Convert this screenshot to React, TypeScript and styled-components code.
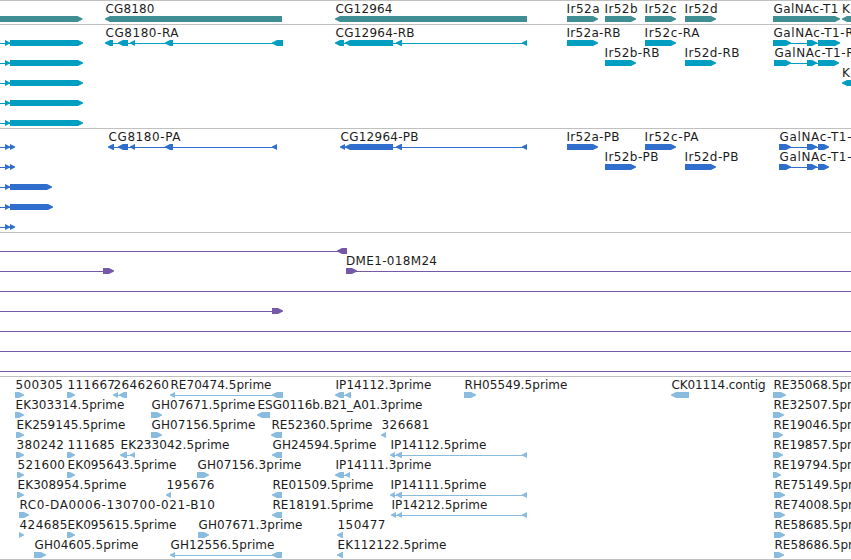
import styled, { createGlobalStyle } from 'styled-components';

const VIEW_WIDTH = 851;
const LANE_HEIGHT = 20;
const HEAD = 5;

const GlobalStyle = createGlobalStyle`
  body {
    margin: 0;
    background: #fff;
    overflow: hidden;
  }
`;

const Browser = styled.main`
  display: flex;
  flex-direction: column;
  width: ${VIEW_WIDTH}px;
  height: 560px;
  box-sizing: border-box;
  border-bottom: 1px solid #c0c0c0;
  overflow: hidden;
`;

const StyledTrack = styled.section<{ $color: string }>`
  display: flex;
  flex: none;
  flex-direction: column;
  padding-bottom: 3px;
  border-top: 1px solid #c0c0c0;
  color: ${(props) => props.$color};

  &:last-child {
    padding-bottom: 2px;
  }
`;

// Glyphs hang one pixel below the lane box, so each lane is allowed to spill over.
const Lane = styled.svg`
  display: block;
  flex: none;
  width: ${VIEW_WIDTH}px;
  height: ${LANE_HEIGHT}px;
  overflow: visible;
`;

const Label = styled.text`
  fill: #1c1c1c;
  font-family: 'DejaVu Sans', sans-serif;
  font-size: 12px;
`;

type Strand = '+' | '-';
type Span = [number, number];

interface Feature {
  strand?: Strand;
  exons?: Span[];
  // intron line, when it reaches past the exons
  line?: Span;
  label?: string;
  at?: Span;
}

const f = (strand: Strand, exons: Span[], label?: string, at?: Span, line?: Span): Feature => ({
  strand, exons, label, at, line,
});

const edge = (...exons: Span[]) => f('+', exons, undefined, undefined, [0, exons[0][0]]);
const through: Feature = { line: [0, VIEW_WIDTH] };

const tracks: { name: string; color: string; lanes: Feature[][] }[] = [
  {
    name: 'genes',
    color: '#3f8e93',
    lanes: [[
      f('+', [[-10, 82.5]]),
      f('-', [[105, 282]], 'CG8180', [105, 154]),
      f('-', [[335, 527]], 'CG12964', [335, 392]),
      f('+', [[567, 598]], 'Ir52a', [566, 599]),
      f('+', [[605, 636]], 'Ir52b', [604, 637]),
      f('+', [[645, 676]], 'Ir52c', [644, 676]),
      f('+', [[685, 716]], 'Ir52d', [684, 717]),
      f('+', [[773, 840]], 'GalNAc-T1', [773, 838]),
      f('-', [[842, 870]], 'K', [841.5, 850]),
    ]],
  },
  {
    name: 'transcripts',
    color: '#009fc1',
    lanes: [
      [
        edge([5, 10], [10, 83]),
        f('-', [[105, 113], [118, 128], [130, 135], [165, 173], [272, 283]], 'CG8180-RA', [105, 178]),
        f('-', [[335, 344], [345, 393], [396, 402], [522, 527]], 'CG12964-RB', [335, 414]),
        f('+', [[567, 598]], 'Ir52a-RB', [566, 620]),
        f('+', [[645, 676]], 'Ir52c-RA', [644, 699]),
        f('+', [[773, 791], [807, 817], [818, 840]], 'GalNAc-T1-R', [773, 853]),
      ],
      [
        edge([5, 10], [10, 83]),
        f('+', [[605, 636]], 'Ir52b-RB', [604, 659]),
        f('+', [[685, 716]], 'Ir52d-RB', [684, 739]),
        f('+', [[774, 791], [807, 817], [818, 839]], 'GalNAc-T1-R', [774, 854]),
      ],
      [edge([5, 10], [10, 83]), f('-', [[842, 870]], 'K', [841.5, 850])],
      [edge([5, 10], [10, 83])],
      [edge([5, 10], [10, 83])],
    ],
  },
  {
    name: 'proteins',
    color: '#306ecd',
    lanes: [
      [
        edge([5, 10], [10, 15]),
        f('-', [[108, 114], [118, 128], [130, 135], [165, 173], [272, 277]], 'CG8180-PA', [108, 180]),
        f('-', [[340, 345], [345, 393], [396, 402], [522, 527]], 'CG12964-PB', [340, 418]),
        f('+', [[567, 598]], 'Ir52a-PB', [566, 619]),
        f('+', [[645, 676]], 'Ir52c-PA', [644, 698]),
        f('+', [[779, 791], [807, 817], [818, 829]], 'GalNAc-T1-', [779, 851]),
      ],
      [
        edge([5, 10], [10, 15]),
        f('+', [[605, 636]], 'Ir52b-PB', [604, 658]),
        f('+', [[685, 716]], 'Ir52d-PB', [684, 738]),
        f('+', [[779, 791], [807, 817], [818, 829]], 'GalNAc-T1-', [779, 851]),
      ],
      [edge([5, 10], [10, 52])],
      [edge([5, 10], [10, 53])],
      [edge([5, 10], [10, 15])],
    ],
  },
  {
    name: 'clones',
    color: '#7658a8',
    lanes: [
      [f('-', [[337, 347]], undefined, undefined, [0, 340])],
      [
        edge([103, 114]),
        f('+', [[346, 357]], 'DME1-018M24', [345.5, 436.5], [350, VIEW_WIDTH]),
      ],
      [through],
      [edge([272, 283])],
      [through],
      [through],
      [through],
    ],
  },
  {
    name: 'ests',
    color: '#89bcde',
    lanes: [
      [
        f('+', [[15, 24]], '500305', [15, 62.5]),
        f('+', [[67, 75]], '111667', [67, 114.5]),
        f('-', [[113, 118], [119, 127]], '2646260', [113, 168.5]),
        f('-', [[170, 175], [272, 283]], 'RE70474.5prime', [170, 271]),
        f('-', [[335, 344], [345, 351]], 'IP14112.3prime', [335, 431]),
        f('+', [[464, 476]], 'RH05549.5prime', [464, 567]),
        f('-', [[671, 689]], 'CK01114.contig', [671, 765]),
        f('+', [[773, 786]], 'RE35068.5prime', [773, 874]),
      ],
      [
        f('+', [[15, 24]], 'EK303314.5prime', [15, 124]),
        f('+', [[151, 162]], 'GH07671.5prime', [151, 255]),
        f('-', [[257, 270]], 'ESG0116b.B21_A01.3prime', [257, 422]),
        f('+', [[773, 784]], 'RE32507.5prime', [773, 874]),
      ],
      [
        f('+', [[16, 24]], 'EK259145.5prime', [16, 125]),
        f('+', [[151, 162]], 'GH07156.5prime', [151, 255]),
        f('-', [[271, 282]], 'RE52360.5prime', [271, 372]),
        f('-', [[381, 386]], '326681', [381, 429]),
        f('+', [[773, 783]], 'RE19046.5prime', [773, 874]),
      ],
      [
        f('+', [[16, 24]], '380242', [16, 63.5]),
        f('+', [[67, 75]], '111685', [67, 114.5]),
        f('-', [[120, 127], [130, 135]], 'EK233042.5prime', [120, 229]),
        f('-', [[272, 282]], 'GH24594.5prime', [272, 376]),
        f('-', [[390, 395], [396, 402], [522, 527]], 'IP14112.5prime', [390, 486]),
        f('+', [[773, 783]], 'RE19857.5prime', [773, 874]),
      ],
      [
        f('+', [[17, 24]], '521600', [17, 64.5]),
        f('+', [[67, 75]], 'EK095643.5prime', [67, 176]),
        f('+', [[197, 209]], 'GH07156.3prime', [197, 301]),
        f('-', [[335, 344], [345, 350]], 'IP14111.3prime', [335, 431]),
        f('+', [[773, 781]], 'RE19794.5prime', [773, 874]),
      ],
      [
        f('+', [[17, 24]], 'EK308954.5prime', [17, 126]),
        f('-', [[166, 171]], '195676', [166, 214]),
        f('-', [[272, 282]], 'RE01509.5prime', [272, 373]),
        f('-', [[390, 395], [396, 402], [522, 527]], 'IP14111.5prime', [390, 486]),
        f('+', [[774, 785]], 'RE75149.5prime', [774, 875]),
      ],
      [
        f('+', [[19, 29]], 'RC0-DA0006-130700-021-B10', [19, 214.5]),
        f('-', [[272, 282]], 'RE18191.5prime', [272, 373]),
        f('-', [[391, 396], [397, 402], [522, 527]], 'IP14212.5prime', [391, 487]),
        f('+', [[774, 785]], 'RE74008.5prime', [774, 875]),
      ],
      [
        f('+', [[19, 24]], '424685', [19, 67]),
        f('+', [[67, 75]], 'EK095615.5prime', [67, 176]),
        f('+', [[198, 209]], 'GH07671.3prime', [198, 302]),
        f('-', [[337, 343]], '150477', [337, 385]),
        f('+', [[774, 785]], 'RE58685.5prime', [774, 875]),
      ],
      [
        f('+', [[34, 46]], 'GH04605.5prime', [34, 138]),
        f('-', [[170, 175], [272, 282]], 'GH12556.5prime', [170, 274]),
        f('-', [[337, 343]], 'EK112122.5prime', [337, 446]),
        f('+', [[774, 784]], 'RE58686.5prime', [774, 875]),
      ],
    ],
  },
];

const Exon = (props: { span: Span; strand?: Strand }) => {
  const [start, end] = props.span;
  const points = props.strand === '-'
    ? [[end, 15], [start + HEAD, 15], [start, 17.5], [start, 18.5], [start + HEAD, 21], [end, 21]]
    : [[start, 15], [end - HEAD, 15], [end, 17.5], [end, 18.5], [end - HEAD, 21], [start, 21]];

  return <polygon fill="currentColor" points={points.map((p) => p.join(',')).join(' ')} />;
};

const FeatureGlyph = ({ strand, exons = [], line, label, at }: Feature) => {
  const first = exons[0];
  const last = exons[exons.length - 1];

  return (
    <g>
      {exons.length > 1 && (
        <rect x={first[0] + 2} y={18} width={last[1] - first[0] - 4} height={1} fill="currentColor" />
      )}
      {line && <rect x={line[0]} y={18} width={line[1] - line[0]} height={1} fill="currentColor" />}
      {exons.map((span) => <Exon key={span[0]} span={span} strand={strand} />)}
      {label && at && <Label x={at[0] + 0.5} y={12} textLength={at[1] - at[0]}>{label}</Label>}
    </g>
  );
};

const App = () => (
  <>
    <GlobalStyle />
    <Browser>
      {tracks.map((track) => (
        <StyledTrack key={track.name} $color={track.color}>
          {track.lanes.map((features, i) => (
            <Lane key={i}>
              {features.map((feature, j) => <FeatureGlyph key={j} {...feature} />)}
            </Lane>
          ))}
        </StyledTrack>
      ))}
    </Browser>
  </>
);

export default App;
